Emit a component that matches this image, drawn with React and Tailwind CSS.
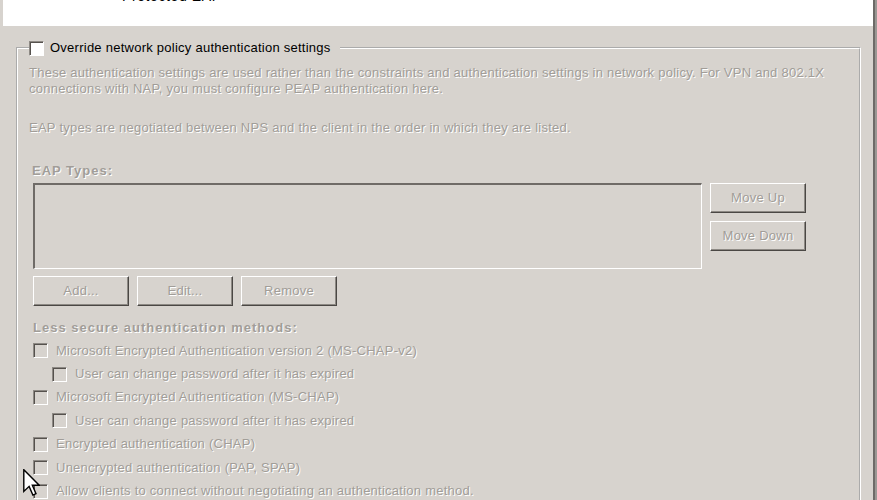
import React from 'react';

const font = "font-['Liberation_Sans',Arial,sans-serif]";
const dim = 'text-[#a19d98] [text-shadow:1px_1px_0_#ffffff]';

function Check({ on }) {
  return (
    <span
      className={`inline-block w-[15px] h-[15px] shrink-0 border border-t-[#8d8984] border-l-[#8d8984] border-r-white border-b-white shadow-[inset_1px_1px_0_#55514d] ${
        on ? 'bg-white' : 'bg-[#d7d3ce]'
      }`}
    />
  );
}

function Btn({ children, className = '' }) {
  return (
    <div
      className={`w-[96px] h-[30px] flex items-center justify-center border border-t-white border-l-white border-r-[#4a4744] border-b-[#4a4744] shadow-[inset_-1px_-1px_0_#8d8984] ${dim} ${className}`}
    >
      {children}
    </div>
  );
}

function Row({ indent, children }) {
  return (
    <div className={`h-[23.4px] flex items-center gap-[8px] ${indent ? 'pl-[19px]' : ''}`}>
      <Check />
      <span className={dim}>{children}</span>
    </div>
  );
}

export default function App() {
  const methods = [
    { label: 'Microsoft Encrypted Authentication version 2 (MS-CHAP-v2)' },
    { label: 'User can change password after it has expired', indent: true },
    { label: 'Microsoft Encrypted Authentication (MS-CHAP)' },
    { label: 'User can change password after it has expired', indent: true },
    { label: 'Encrypted authentication (CHAP)' },
    { label: 'Unencrypted authentication (PAP, SPAP)' },
    { label: 'Allow clients to connect without negotiating an authentication method.' },
  ];

  return (
    <div className={`relative w-[877px] h-[500px] overflow-hidden bg-[#d7d3ce] flex ${font} text-[13px] leading-[16px] tracking-[0.25px]`}>
      <div className="flex-1 flex flex-col">
        {/* header strip */}
        <div className="h-[26px] shrink-0 ml-[3px] bg-white overflow-hidden">
          <div className="-mt-[11px] pl-[119px] text-[14px] leading-[14px] tracking-[0.6px] text-black">Protected EAP</div>
        </div>

        <fieldset className="shrink-0 mt-[14px] ml-[16px] mr-[12px] h-[600px] border-2 border-white [border-style:groove] pl-[15px] pr-[10px] pt-[9px]">
          <legend className="flex items-center gap-[6px] pr-[9px] -ml-[4px] text-black">
            <Check on />
            <span>Override network policy authentication settings</span>
          </legend>

          <div className={`-ml-[4px] ${dim}`}>
            <p>
              These authentication settings are used rather than the constraints and authentication settings in network policy. For VPN and 802.1X
              <br />
              connections with NAP, you must configure PEAP authentication here.
            </p>
            <p className="mt-[23px]">EAP types are negotiated between NPS and the client in the order in which they are listed.</p>
          </div>

          <div className={`mt-[27px] -ml-[1px] font-bold tracking-[1px] ${dim}`}>EAP Types:</div>

          <div className="mt-[4px] flex gap-[8px]">
            <div className="w-[669px] h-[86px] border-t-2 border-l-2 border-r border-b border-t-[#6f6b67] border-l-[#6f6b67] border-r-white border-b-white" />
            <div className="flex flex-col gap-[8px]">
              <Btn className="h-[29px]">Move Up</Btn>
              <Btn className="h-[29px]">Move Down</Btn>
            </div>
          </div>

          <div className="mt-[7px] flex gap-[8px]">
            <Btn>Add...</Btn>
            <Btn>Edit...</Btn>
            <Btn>Remove</Btn>
          </div>

          <div className={`mt-[14px] font-bold tracking-[1px] ${dim}`}>Less secure authentication methods:</div>

          <div className="mt-[3px] flex flex-col">
            {methods.map((m, i) => (
              <Row key={i} indent={m.indent}>
                {m.label}
              </Row>
            ))}
          </div>
        </fieldset>
      </div>

      {/* window edge */}
      <div className="w-[4px] border-l-2 border-[#6d6a67] bg-[#9a9793]" />

      {/* mouse pointer */}
      <svg className="absolute left-[23px] top-[469px]" width="17" height="28" viewBox="0 0 12 20">
        <path d="M0.5 0.5 L0.5 16 L4.3 12.4 L7 18.6 L9.2 17.6 L6.6 11.6 L11.5 11.6 Z" fill="#ffffff" stroke="#000000" strokeWidth="1" strokeLinejoin="miter" />
      </svg>
    </div>
  );
}
